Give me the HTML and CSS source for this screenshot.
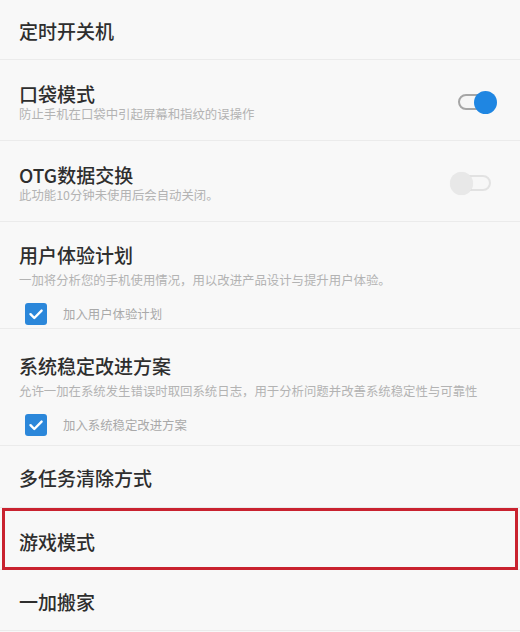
FILE: index.html
```html
<!DOCTYPE html>
<html lang="zh-CN">
<head>
<meta charset="utf-8">
<title>设置</title>
<link rel="stylesheet" href="styles.css">
</head>
<body>
<div class="list">
  <div class="row row-first">
    <div class="title">定时开关机</div>
  </div>
  <div class="row row-switch">
    <div class="text">
      <div class="title">口袋模式</div>
      <div class="sub">防止手机在口袋中引起屏幕和指纹的误操作</div>
    </div>
    <div class="switch on"><span class="track"></span><span class="knob"></span></div>
  </div>
  <div class="row row-switch">
    <div class="text">
      <div class="title">OTG数据交换</div>
      <div class="sub">此功能10分钟未使用后会自动关闭。</div>
    </div>
    <div class="switch off"><span class="track"></span><span class="knob"></span></div>
  </div>
  <div class="row row-check row-check-a">
    <div class="title">用户体验计划</div>
    <div class="sub sub-gap">一加将分析您的手机使用情况，用以改进产品设计与提升用户体验。</div>
    <div class="check-line">
      <span class="checkbox"><svg viewBox="0 0 22 22" width="22" height="22"><path d="M5.5 11.2 L9.3 15 L16.6 7.6" fill="none" stroke="#fff" stroke-width="2.4" stroke-linecap="round" stroke-linejoin="round"/></svg></span>
      <span class="check-label">加入用户体验计划</span>
    </div>
  </div>
  <div class="row row-check row-check-b">
    <div class="title">系统稳定改进方案</div>
    <div class="sub sub-gap">允许一加在系统发生错误时取回系统日志，用于分析问题并改善系统稳定性与可靠性</div>
    <div class="check-line">
      <span class="checkbox"><svg viewBox="0 0 22 22" width="22" height="22"><path d="M5.5 11.2 L9.3 15 L16.6 7.6" fill="none" stroke="#fff" stroke-width="2.4" stroke-linecap="round" stroke-linejoin="round"/></svg></span>
      <span class="check-label">加入系统稳定改进方案</span>
    </div>
  </div>
  <div class="row row-simple">
    <div class="title">多任务清除方式</div>
  </div>
  <div class="row row-simple row-marked">
    <div class="title">游戏模式</div>
  </div>
  <div class="row row-simple row-last">
    <div class="title">一加搬家</div>
  </div>
</div>
</body>
</html>
```

FILE: styles.css
```css
html, body {
  margin: 0;
  padding: 0;
}
body {
  width: 520px;
  height: 632px;
  overflow: hidden;
  background: #f8f8f8;
  font-family: "Noto Sans CJK SC", "Noto Sans", sans-serif;
}
.list {
  display: flex;
  flex-direction: column;
}
.row {
  position: relative;
  padding-left: 19px;
  padding-right: 23px;
  border-bottom: 1px solid #ebebeb;
}
.title {
  font-size: 19px;
  line-height: 24px;
  color: #2e2e2e;
  font-weight: 500;
  white-space: nowrap;
}
.sub {
  font-size: 12.4px;
  line-height: 16px;
  color: #b3b3b3;
  white-space: nowrap;
}
.sub-gap {
  margin-top: 5px;
}
.row-first {
  padding-top: 19px;
  padding-bottom: 16px;
}
.row-switch {
  display: flex;
  align-items: center;
  justify-content: space-between;
  padding-top: 22px;
  padding-bottom: 18px;
}
.row-check-a {
  padding-top: 21px;
  padding-bottom: 3px;
}
.row-check-b {
  padding-top: 25px;
  padding-bottom: 9px;
}
.check-line {
  display: flex;
  align-items: center;
  margin-top: 15px;
  margin-left: 6px;
  gap: 16px;
}
.checkbox {
  display: block;
  width: 22px;
  height: 22px;
  border-radius: 3px;
  background: #2b87da;
}
.checkbox svg {
  display: block;
}
.check-label {
  font-size: 12.4px;
  line-height: 22px;
  color: #a9a9a9;
}
.row-simple {
  padding-top: 20px;
  padding-bottom: 17px;
}
.row-marked {
  padding-top: 22px;
  padding-bottom: 15px;
}
.row-marked::after {
  content: "";
  position: absolute;
  top: 0;
  left: 2px;
  right: 2px;
  bottom: -1px;
  border: 3px solid #c9222f;
  pointer-events: none;
}
.row-last {
  padding-top: 20px;
  padding-bottom: 16px;
}
.switch {
  position: relative;
  width: 45px;
  height: 23px;
  flex: none;
}
.switch .track {
  position: absolute;
  left: 6px;
  right: 6px;
  top: 3.5px;
  height: 16px;
  box-sizing: border-box;
  border: 2px solid #a6a6a6;
  border-radius: 8px;
  background: #f6f6f6;
}
.switch .knob {
  position: absolute;
  top: 0;
  width: 23px;
  height: 23px;
  border-radius: 50%;
}
.switch.on .knob {
  right: 0;
  background: #1f86e2;
}
.switch.off .track {
  border-color: #e2e2e2;
  background: #f7f7f7;
}
.switch.off .knob {
  left: -2px;
  background: #e8e8e8;
  box-shadow: 0 0 1px rgba(0,0,0,0.06);
}
```
